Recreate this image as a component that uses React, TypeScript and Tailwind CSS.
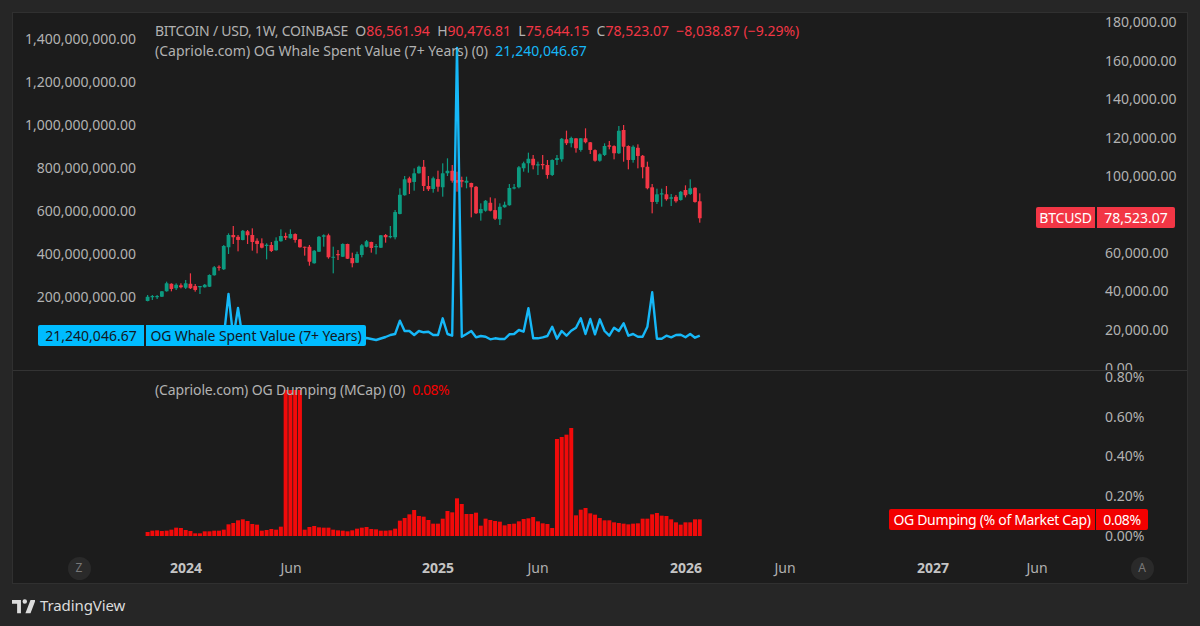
type Candle = [number, number, number, number, "g" | "r"];

// candle y values read at 3x, converted to chart pixels below
const firstCandles: Candle[] = [
  [530, 543, 525, 544, "g"], [528, 532, 525, 540, "g"], [528, 531, 525, 537, "g"], [514, 530, 513, 531, "g"],
  [490, 514, 485, 515, "g"], [491, 507, 490, 514, "r"], [494, 505, 490, 510, "g"], [496, 502, 490, 505, "r"],
  [490, 503, 480, 507, "g"], [491, 505, 460, 507, "r"], [498, 510, 492, 515, "r"], [498, 502, 498, 522, "g"],
  [494, 502, 492, 503, "g"], [465, 500, 463, 501, "g"], [442, 466, 438, 467, "g"], [440, 443, 436, 452, "r"],
  [378, 448, 375, 450, "g"], [345, 382, 340, 402, "g"], [345, 352, 318, 372, "r"], [350, 360, 345, 394, "r"],
  [332, 360, 330, 361, "g"], [334, 346, 330, 372, "r"], [345, 366, 325, 392, "r"], [362, 372, 355, 400, "r"],
  [370, 383, 355, 385, "r"], [374, 378, 370, 418, "g"], [375, 393, 366, 396, "r"], [362, 391, 352, 392, "g"],
  [348, 364, 328, 365, "g"], [348, 353, 338, 360, "r"], [342, 355, 328, 356, "g"], [342, 360, 340, 368, "r"],
  [358, 382, 357, 383, "r"], [380, 382, 380, 407, "r"], [380, 425, 375, 437, "r"], [392, 430, 390, 431, "g"],
  [350, 395, 348, 396, "g"], [346, 350, 343, 380, "g"], [346, 412, 341, 416, "r"], [410, 412, 380, 460, "g"],
  [402, 405, 390, 420, "r"], [372, 410, 370, 411, "g"], [372, 416, 371, 417, "r"], [414, 430, 398, 442, "r"],
  [402, 428, 395, 429, "g"], [376, 405, 372, 412, "g"], [364, 380, 360, 382, "g"], [366, 384, 365, 398, "r"],
  [378, 382, 372, 403, "g"], [346, 383, 345, 384, "g"], [345, 352, 342, 368, "r"], [348, 352, 318, 355, "g"],
  [276, 352, 270, 358, "g"], [224, 282, 205, 283, "g"], [178, 226, 168, 227, "g"], [175, 188, 170, 222, "r"],
  [160, 186, 145, 212, "g"], [140, 160, 137, 161, "g"],
];

const lastCandles: Candle[] = [
  [170, 228, 150, 243, "r"], [228, 238, 198, 243, "r"], [205, 237, 200, 248, "g"], [207, 230, 182, 245, "r"],
  [190, 232, 160, 260, "g"], [182, 190, 145, 198, "g"], [182, 212, 165, 218, "r"], [210, 218, 185, 245, "r"],
  [210, 215, 200, 232, "r"], [212, 218, 200, 235, "g"], [219, 232, 218, 322, "r"], [230, 310, 228, 312, "r"],
  [297, 310, 280, 332, "g"], [272, 302, 270, 305, "g"], [278, 302, 262, 304, "r"], [300, 326, 265, 330, "r"],
  [290, 328, 280, 345, "g"], [284, 292, 275, 293, "g"], [234, 286, 222, 287, "g"], [232, 234, 222, 238, "g"],
  [172, 232, 168, 235, "g"], [160, 175, 155, 185, "g"], [146, 160, 128, 188, "g"], [146, 166, 135, 178, "r"],
  [163, 166, 155, 195, "g"], [162, 165, 135, 178, "r"], [165, 195, 150, 206, "r"], [150, 195, 148, 198, "g"],
  [144, 150, 135, 165, "g"], [86, 148, 84, 155, "g"], [88, 100, 62, 105, "r"], [84, 100, 80, 112, "g"],
  [85, 115, 85, 128, "r"], [85, 120, 84, 125, "g"], [85, 97, 55, 100, "r"], [97, 120, 96, 132, "r"],
  [120, 152, 118, 155, "r"], [133, 152, 130, 155, "g"], [108, 135, 100, 138, "g"], [106, 110, 93, 118, "r"],
  [108, 130, 106, 148, "r"], [62, 130, 48, 132, "g"], [60, 110, 45, 155, "r"], [108, 150, 106, 178, "r"],
  [110, 150, 106, 158, "g"], [113, 138, 103, 175, "r"], [137, 172, 135, 205, "r"], [170, 235, 155, 238, "r"],
  [232, 276, 222, 310, "r"], [253, 276, 236, 282, "g"], [250, 252, 236, 290, "g"], [253, 268, 228, 272, "r"],
  [262, 266, 252, 288, "g"], [260, 274, 255, 278, "r"], [245, 270, 243, 272, "g"], [240, 256, 226, 262, "r"],
  [235, 252, 208, 255, "g"], [233, 276, 232, 278, "r"], [274, 325, 250, 338, "r"],
];

const scaleCandle = (c: Candle, origin: number): Candle => [
  origin + c[0] / 3,
  origin + c[1] / 3,
  origin + c[2] / 3,
  origin + c[3] / 3,
  c[4],
];

const candles = [
  ...firstCandles.map((c) => scaleCandle(c, 120)),
  ...lastCandles.map((c) => scaleCandle(c, 110)),
];

const barX = (i: number) => 147.6 + 4.76 * i;

// whale value, chart y per week (the start sits behind the label)
const whaleHead = [
  340, 340, 340, 340, 340, 339, 339, 338, 339, 340, 339, 339, 338, 338, 339, 338, 337, 294, 338, 308, 339, 339, 339,
  339, 339, 339, 339, 339, 339, 339, 339, 339, 339, 339, 339, 339, 339, 339, 339, 339, 339, 339, 339, 339, 339, 339,
  338, 339, 340, 338.5, 337, 335, 334,
];
const whaleTail = [
  122, 153, 153, 165, 153, 157, 155, 165, 165, 115, 162, 167, -696, 170, 162, 153, 172, 168, 170, 178, 175, 177, 177,
  163, 162, 150, 155, 85, 175, 175, 172, 168, 140, 176, 153, 167, 152, 143, 115, 162, 117, 163, 118, 153, 167, 143,
  153, 130, 167, 162, 170, 170, 140, 37, 176, 176, 167, 172, 165, 164, 172, 162, 173, 167,
];
const whale = [...whaleHead, ...whaleTail.map((v) => 280 + v / 3)];
const whalePoints = whale.map((y, i) => `${barX(i).toFixed(1)},${y.toFixed(1)}`).join(" ");

// bar tops at 3x from y=420, -1 means clipped at the top of the pane
const dumpFirst = [
  336, 332, 331, 333, 332, 329, 323, 324, 330, 333, 340, 340, 334, 334, 332, 332, 329, 313, 309, 301, 298, 303, 312,
  314, 332, 330, 327, 329, 320, -1, -1, -1, -1, 329, 321, 318, 322, 323, 323, 329, 331, 332, 334, 331, 326, 323, 321,
  327, 328, 332, 332, 331, 326, 302, 294, 283, 270, 288,
];
const dumpLast = [
  290, 300, 311, 311, 296, 273, 277, 235, 252, 282, 282, 278, 317, 296, 300, 303, 305, 316, 312, 311, 304, 297, 295,
  291, 304, 310, 312, 324, 57, 51, 44, 24, 286, 269, 264, 280, 284, 294, 301, 301, 307, 309, 311, 313, 311, 310, 296,
  296, 283, 279, 287, 288, 298, 307, 314, 307, 307, 298, 298,
];
const dump = [...dumpFirst, ...dumpLast].map((v) => (v < 0 ? 390 : 420 + v / 3));

const leftTicks = [
  "1,400,000,000.00",
  "1,200,000,000.00",
  "1,000,000,000.00",
  "800,000,000.00",
  "600,000,000.00",
  "400,000,000.00",
  "200,000,000.00",
];
// the 80,000 tick is covered by the BTCUSD tag, its row stays empty
const rightTicks = [
  "180,000.00",
  "160,000.00",
  "140,000.00",
  "120,000.00",
  "100,000.00",
  "",
  "60,000.00",
  "40,000.00",
  "20,000.00",
  "0.00",
];
const pctTicks = ["0.80%", "0.60%", "0.40%", "0.20%", "0.00%"];

function AxisCircle({ label, className }: { label: string; className: string }) {
  return (
    <div className={`flex w-[60px] justify-center ${className}`}>
      <span className="flex h-[23px] w-[23px] items-center justify-center rounded-full bg-[#2a2a2a] text-[12px] text-[#787878]">
        {label}
      </span>
    </div>
  );
}

function Tick({ label, year, className }: { label: string; year?: boolean; className: string }) {
  return (
    <span className={`w-[60px] text-center ${year ? "font-bold text-[#c4c4c4]" : "text-[#b0b0b0]"} ${className}`}>
      {label}
    </span>
  );
}

export default function App() {
  return (
    <div className="flex h-[626px] w-[1200px] flex-col overflow-hidden bg-[#262626] font-['Noto_Sans',sans-serif] text-[14px] leading-[20px] text-[#b2b2b2]">
      <div className="mx-3 mt-3 flex h-[572px] flex-col border border-[#303030] bg-[#1c1c1c]">
        {/* price pane */}
        <div className="relative flex h-[358px] shrink-0 overflow-hidden border-b border-[#333333]">
          <div className="flex w-[126px] shrink-0 flex-col pt-[4.5px] pr-[3px] text-right">
            {leftTicks.map((t) => (
              <span key={t} className="flex h-[43px] shrink-0 items-center justify-end">
                {t}
              </span>
            ))}
          </div>
          <svg className="h-[357px] w-[961px] shrink-0" viewBox="139 13 961 357">
            {candles.map(([top, bottom, high, low, dir], i) => {
              const color = dir === "g" ? "#0c9a80" : "#f23645";
              const x = barX(i);
              return (
                <g key={i} fill={color}>
                  <rect x={x - 0.6} y={high} width={1.2} height={low - high} />
                  <rect x={x - 1.9} y={top} width={3.8} height={Math.max(bottom - top, 1.2)} rx={0.4} />
                </g>
              );
            })}
            <polyline points={whalePoints} fill="none" stroke="#16b8f8" strokeWidth={2.4} strokeLinejoin="round" />
          </svg>
          <div className="mt-[-10px] flex w-[87px] shrink-0 flex-col pl-[5px]">
            {rightTicks.map((t, i) => (
              <span key={i} className="flex h-[38.44px] shrink-0 items-center">
                {t}
              </span>
            ))}
          </div>

          <div className="absolute top-[8px] left-[142px] whitespace-pre">
            <span className="tracking-[-0.25px]">BITCOIN / USD, 1W, COINBASE</span>
            {"  "}O<span className="text-[#f23645]">86,561.94</span>
            {"  "}H<span className="text-[#f23645]">90,476.81</span>
            {"  "}L<span className="text-[#f23645]">75,644.15</span>
            {"  "}C<span className="text-[#f23645]">78,523.07</span>
            <span className="text-[#f23645]">{"  "}−8,038.87 (−9.29%)</span>
          </div>
          <div className="absolute top-[28px] left-[142px] whitespace-pre">
            (Capriole.com) OG Whale Spent Value (7+ Years) (0){"  "}
            <span className="text-[#16b8f8]">21,240,046.67</span>
          </div>

          <div className="absolute top-[312px] left-[25px] flex h-[21px] items-center gap-[2px] text-[#131722]">
            <span className="flex h-full w-[106px] items-center justify-center rounded-l-[2px] bg-[#00bcff]">
              21,240,046.67
            </span>
            <span className="flex h-full w-[220px] items-center justify-center rounded-r-[2px] bg-[#00bcff] tracking-[-0.1px] whitespace-nowrap">
              OG Whale Spent Value (7+ Years)
            </span>
          </div>
          <div className="absolute top-[194px] left-[1023px] flex h-[21px] items-center gap-[2px] text-white">
            <span className="flex h-full w-[59px] items-center justify-center rounded-l-[2px] bg-[#f23645] tracking-[-0.2px]">
              BTCUSD
            </span>
            <span className="flex h-full w-[78px] items-center justify-center rounded-r-[2px] bg-[#f23645]">
              78,523.07
            </span>
          </div>
        </div>

        {/* dumping pane */}
        <div className="relative flex h-[178px] shrink-0 overflow-hidden">
          <div className="w-[126px] shrink-0" />
          <svg className="h-[178px] w-[961px] shrink-0" viewBox="139 371 961 178">
            {dump.map((top, i) => (
              <rect key={i} x={barX(i) - 2} y={top} width={4} height={536 - top} fill="#f20a0a" />
            ))}
          </svg>
          <div className="mt-[-14px] flex w-[87px] shrink-0 flex-col pl-[5px]">
            {pctTicks.map((t) => (
              <span key={t} className="flex h-[39.75px] shrink-0 items-center">
                {t}
              </span>
            ))}
          </div>

          <div className="absolute top-[9px] left-[142px] whitespace-pre">
            <span className="tracking-[-0.14px]">(Capriole.com) OG Dumping (MCap) (0)</span>
            {"  "}
            <span className="tracking-[-0.5px] text-[#f20000]">0.08%</span>
          </div>
          <div className="absolute top-[138px] left-[876px] flex h-[21px] items-center gap-[1px] text-white">
            <span className="flex h-full w-[206px] items-center justify-center rounded-l-[2px] bg-[#f20000] tracking-[-0.32px] whitespace-nowrap">
              OG Dumping (% of Market Cap)
            </span>
            <span className="flex h-full w-[52px] items-center justify-center rounded-r-[2px] bg-[#f20000] tracking-[-0.4px]">
              0.08%
            </span>
          </div>
        </div>

        {/* time axis */}
        <div className="flex flex-1 items-center pt-[4px]">
          <AxisCircle label="Z" className="ml-[36px]" />
          <Tick label="2024" year className="ml-[47px]" />
          <Tick label="Jun" className="ml-[45px]" />
          <Tick label="2025" year className="ml-[87px]" />
          <Tick label="Jun" className="ml-[40px]" />
          <Tick label="2026" year className="ml-[88px]" />
          <Tick label="Jun" className="ml-[39px]" />
          <Tick label="2027" year className="ml-[88px]" />
          <Tick label="Jun" className="ml-[44px]" />
          <AxisCircle label="A" className="ml-[45px]" />
        </div>
      </div>

      <div className="ml-3 flex flex-1 items-center gap-[5px] pb-[1px] text-[#dcdcdc]">
        <svg className="h-[18px] w-[23px]" viewBox="0 0 36 28" fill="currentColor">
          <path d="M14 6H0v6h8v15h6V6Zm15 21h-8l8-21h8l-8 21Zm-9-15a3.5 3.5 0 1 0 0-7 3.5 3.5 0 0 0 0 7Z" />
        </svg>
        <span className="text-[15px] tracking-[-0.1px]">TradingView</span>
      </div>
    </div>
  );
}
